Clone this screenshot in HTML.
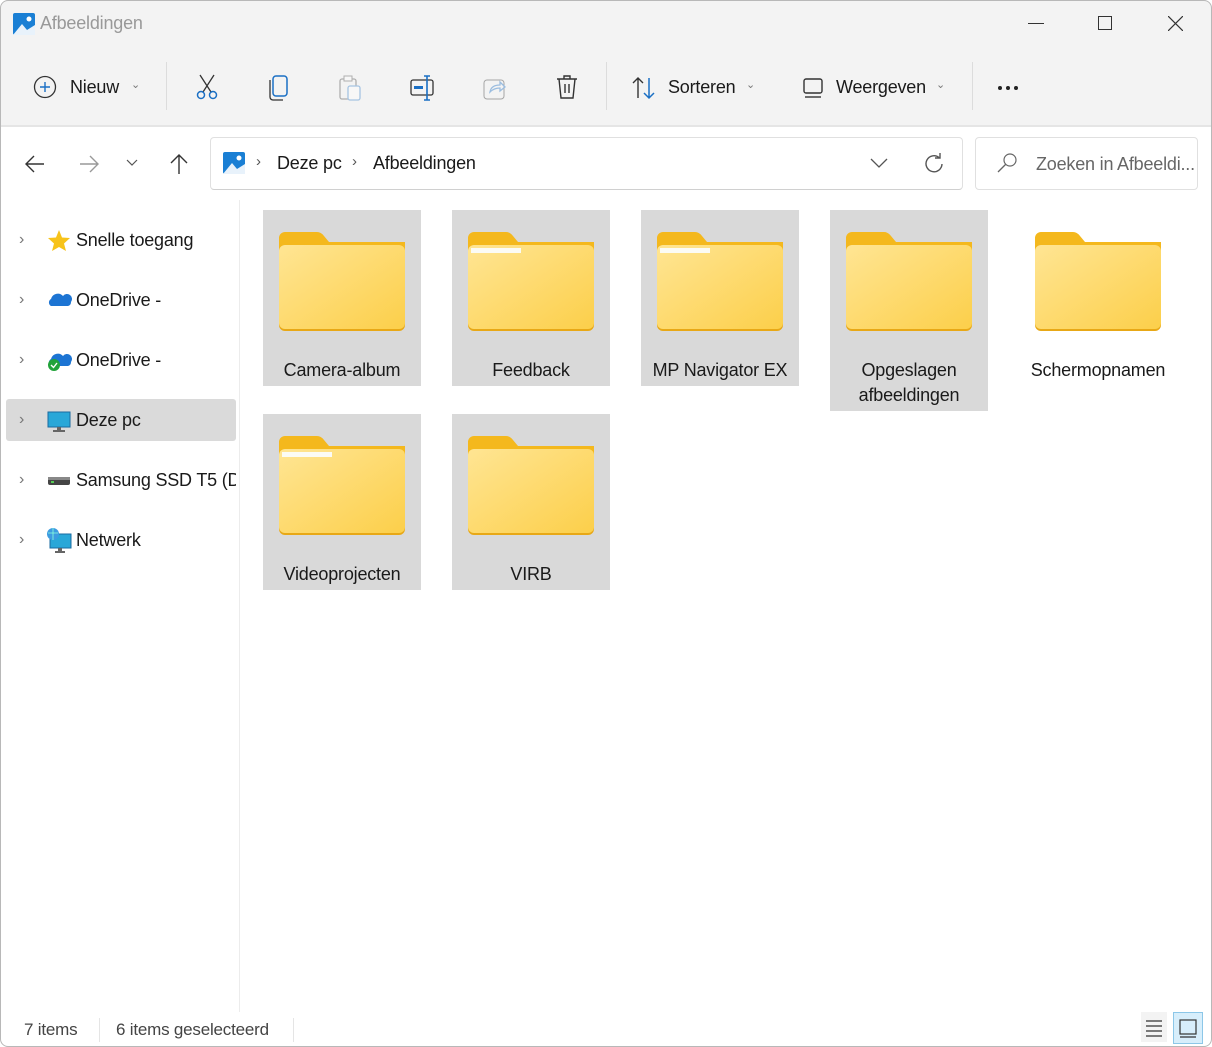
<!DOCTYPE html>
<html><head><meta charset="utf-8"><style>
*{margin:0;padding:0;box-sizing:border-box}
body{width:1212px;height:1047px;overflow:hidden;background:#fff;font-family:"Liberation Sans",sans-serif;color:#1a1a1a;position:relative}
.a{position:absolute}
.win{position:absolute;left:0;top:0;width:1212px;height:1047px;border-radius:8px;overflow:hidden;background:#fff}
.frame{position:absolute;left:0;top:0;width:1212px;height:1047px;border:1px solid #b8b8b8;border-radius:8px;pointer-events:none}
.top{position:absolute;left:0;top:0;width:1212px;height:127px;background:#f3f3f3;border-bottom:2px solid #e5e5e5}
.t{position:absolute;font-size:18px;white-space:nowrap;letter-spacing:-0.2px}
.sep{position:absolute;width:1px;background:#dcdcdc}
.tile{position:absolute;width:158px;background:#d9d9d9}
.tile.n{background:transparent}
.tile svg{position:absolute;left:16px;top:22px}
.lbl{position:absolute;left:0;width:158px;text-align:center;font-size:18px;line-height:25px;top:148px;letter-spacing:-0.2px}
.chev{position:absolute;left:19px;font-size:16px;color:#777}
</style></head><body>
<div class="win">
<div class="top"></div>
<!-- title -->
<svg class="a" style="left:13px;top:13px" width="22" height="22" viewBox="0 0 22 22"><rect width="22" height="22" rx="2" fill="#1a7fd4"/><path d="M0 22 L9 11 L14 17 L22 12 V22Z" fill="#e8f2fb"/><circle cx="16" cy="6" r="2.5" fill="#fff"/></svg>
<div class="t" style="left:40px;top:13px;color:#999">Afbeeldingen</div>
<div class="a" style="left:1028px;top:23px;width:16px;height:1px;background:#333"></div>
<div class="a" style="left:1098px;top:16px;width:14px;height:14px;border:1px solid #333"></div>
<svg class="a" style="left:1168px;top:16px" width="15" height="15"><path d="M0 0L15 15M15 0L0 15" stroke="#333" stroke-width="1.2"/></svg>
<!-- toolbar -->
<svg class="a" style="left:33px;top:75px" width="24" height="24"><circle cx="12" cy="12" r="10.5" fill="none" stroke="#333" stroke-width="1.3"/><path d="M12 7V17M7 12H17" stroke="#1a6fc4" stroke-width="1.4"/></svg>
<div class="t" style="left:70px;top:77px">Nieuw</div>
<div class="t" style="left:131px;top:78px;font-size:11px;color:#777">&#8964;</div>
<div class="sep" style="left:166px;top:62px;height:48px"></div>
<svg class="a" style="left:194px;top:74px" width="26" height="26"><path d="M6 1L17 18M20 1L9 18" stroke="#333" stroke-width="1.3"/><circle cx="7" cy="21" r="3.5" fill="none" stroke="#1a6fc4" stroke-width="1.5"/><circle cx="19" cy="21" r="3.5" fill="none" stroke="#1a6fc4" stroke-width="1.5"/></svg>
<svg class="a" style="left:268px;top:75px" width="24" height="26"><rect x="5" y="1" width="14" height="20" rx="3" fill="none" stroke="#1a6fc4" stroke-width="1.5"/><path d="M2 5V22a3 3 0 0 0 3 3h10" fill="none" stroke="#333" stroke-width="1.3"/></svg>
<svg class="a" style="left:338px;top:75px" width="26" height="26" opacity=".35"><rect x="2" y="4" width="16" height="20" rx="2" fill="none" stroke="#333" stroke-width="1.3"/><rect x="6" y="1" width="8" height="5" fill="#fff" stroke="#333"/><rect x="10" y="11" width="12" height="14" rx="2" fill="#fff" stroke="#1a6fc4" stroke-width="1.3"/></svg>
<svg class="a" style="left:410px;top:75px" width="26" height="26"><rect x="1" y="5" width="22" height="15" rx="2" fill="none" stroke="#333" stroke-width="1.3"/><rect x="4" y="11" width="9" height="3" fill="#1a6fc4"/><path d="M14 1H20M17 1V25M14 25H20" stroke="#1a6fc4" stroke-width="1.6"/></svg>
<svg class="a" style="left:483px;top:76px" width="24" height="24" opacity=".4"><rect x="1" y="4" width="20" height="19" rx="3" fill="none" stroke="#333"/><path d="M7 16C8 10 13 9 17 9V6L22 11L17 15V12C13 12 10 13 7 16Z" fill="none" stroke="#1a6fc4" stroke-width="1.3"/></svg>
<svg class="a" style="left:555px;top:74px" width="24" height="26"><path d="M2 5H22M9 5V2H15V5M4 5L6 24H18L20 5M10 10V19M14 10V19" fill="none" stroke="#333" stroke-width="1.4"/></svg>
<div class="sep" style="left:606px;top:62px;height:48px"></div>
<svg class="a" style="left:631px;top:76px" width="26" height="24"><path d="M7 22V2M2 7L7 2L12 7" fill="none" stroke="#333" stroke-width="1.4"/><path d="M18 2V22M13 17L18 22L23 17" fill="none" stroke="#1a6fc4" stroke-width="1.5"/></svg>
<div class="t" style="left:668px;top:77px">Sorteren</div>
<div class="t" style="left:746px;top:78px;font-size:11px;color:#777">&#8964;</div>
<svg class="a" style="left:802px;top:77px" width="22" height="22"><rect x="2" y="2" width="18" height="14" rx="2" fill="none" stroke="#333" stroke-width="1.4"/><path d="M3 20H19" stroke="#333" stroke-width="1.4"/></svg>
<div class="t" style="left:836px;top:77px">Weergeven</div>
<div class="t" style="left:936px;top:78px;font-size:11px;color:#777">&#8964;</div>
<div class="sep" style="left:972px;top:62px;height:48px"></div>
<div class="a" style="left:998px;top:86px;width:4px;height:4px;border-radius:2px;background:#222;box-shadow:8px 0 #222,16px 0 #222"></div>
<!-- nav row -->
<svg class="a" style="left:24px;top:153px" width="22" height="22"><path d="M20 11H3M10 3L2 11L10 19" fill="none" stroke="#333" stroke-width="1.4"/></svg>
<svg class="a" style="left:78px;top:153px" width="22" height="22"><path d="M2 11H19M12 3L20 11L12 19" fill="none" stroke="#999" stroke-width="1.4"/></svg>
<svg class="a" style="left:126px;top:159px" width="12" height="8"><path d="M1 1L6 6L11 1" fill="none" stroke="#555" stroke-width="1.2"/></svg>
<svg class="a" style="left:168px;top:153px" width="22" height="22"><path d="M11 21V3M3 10L11 2L19 10" fill="none" stroke="#333" stroke-width="1.4"/></svg>
<div class="a" style="left:210px;top:137px;width:753px;height:53px;border:1px solid #e0e0e0;border-bottom-color:#d0d0d0;border-radius:4px"></div>
<svg class="a" style="left:223px;top:152px" width="22" height="22"><rect width="22" height="22" rx="2" fill="#1a7fd4"/><path d="M0 22 L9 11 L14 17 L22 12 V22Z" fill="#e8f2fb"/><circle cx="16" cy="6" r="2.5" fill="#fff"/></svg>
<div class="t" style="left:256px;top:153px;font-size:15px;color:#555">›</div>
<div class="t" style="left:277px;top:153px">Deze pc</div>
<div class="t" style="left:352px;top:153px;font-size:15px;color:#555">›</div>
<div class="t" style="left:373px;top:153px">Afbeeldingen</div>
<svg class="a" style="left:870px;top:158px" width="18" height="10"><path d="M1 1L9 9L17 1" fill="none" stroke="#555" stroke-width="1.3"/></svg>
<svg class="a" style="left:922px;top:152px" width="24" height="24"><path d="M20 12A8 8 0 1 1 17 5.5M18 1V6H13" fill="none" stroke="#555" stroke-width="1.4"/></svg>
<div class="a" style="left:975px;top:137px;width:223px;height:53px;border:1px solid #e0e0e0;border-radius:4px"></div>
<svg class="a" style="left:996px;top:152px" width="22" height="22"><circle cx="14" cy="8" r="6" fill="none" stroke="#666" stroke-width="1.2"/><path d="M10 12L2 20" stroke="#666" stroke-width="1.3"/></svg>
<div class="t" style="left:1036px;top:154px;color:#666">Zoeken in Afbeeldi...</div>
<!-- sidebar -->
<div class="a" style="left:239px;top:200px;width:1px;height:812px;background:#ececec"></div>
<div class="a" style="left:6px;top:399px;width:230px;height:42px;background:#dadada;border-radius:3px"></div>
<div class="chev" style="top:231px">›</div><div class="chev" style="top:291px">›</div><div class="chev" style="top:351px">›</div><div class="chev" style="top:411px">›</div><div class="chev" style="top:471px">›</div><div class="chev" style="top:531px">›</div>
<svg class="a" style="left:47px;top:229px" width="24" height="23"><path d="M12 1L15 8.5L23 9L17 14.5L19 22L12 18L5 22L7 14.5L1 9L9 8.5Z" fill="#f7c31a"/></svg>
<div class="t" style="left:76px;top:230px">Snelle toegang</div>
<svg class="a" style="left:46px;top:290px" width="26" height="18"><path d="M5 16A4 4 0 0 1 5 9A7 7 0 0 1 17 6A5 5 0 0 1 25 12A4 4 0 0 1 22 16Z" fill="#1c74d3"/></svg>
<div class="t" style="left:76px;top:290px">OneDrive -</div>
<svg class="a" style="left:46px;top:350px" width="26" height="22"><path d="M5 16A4 4 0 0 1 5 9A7 7 0 0 1 17 6A5 5 0 0 1 25 12A4 4 0 0 1 22 16Z" fill="#1c74d3"/><circle cx="8" cy="15" r="6" fill="#22a33a"/><path d="M5 15L7.5 17.5L11 13" fill="none" stroke="#fff" stroke-width="1.4"/></svg>
<div class="t" style="left:76px;top:350px">OneDrive -</div>
<svg class="a" style="left:47px;top:411px" width="24" height="22"><rect x="1" y="1" width="22" height="15" fill="#29a7d8" stroke="#1a6ba0"/><rect x="10" y="16" width="4" height="3" fill="#666"/><rect x="6" y="19" width="12" height="2" fill="#666"/></svg>
<div class="t" style="left:76px;top:410px">Deze pc</div>
<svg class="a" style="left:47px;top:475px" width="24" height="12"><rect x="1" y="2" width="22" height="8" rx="2" fill="#444"/><rect x="1" y="2" width="22" height="3" fill="#888"/><rect x="4" y="6" width="3" height="2" fill="#5c5"/></svg>
<div class="t" style="left:76px;top:470px;width:160px;overflow:hidden">Samsung SSD T5 (D</div>
<svg class="a" style="left:46px;top:527px" width="26" height="26"><rect x="4" y="7" width="21" height="14" fill="#29a7d8" stroke="#1a6ba0"/><circle cx="7" cy="7" r="6" fill="#3d9be0"/><path d="M2 6H12M7 1V13" stroke="#8fd" stroke-width=".8"/><rect x="12" y="21" width="4" height="3" fill="#666"/><rect x="9" y="24" width="10" height="2" fill="#666"/></svg>
<div class="t" style="left:76px;top:530px">Netwerk</div>
<!-- folders -->
<svg width="0" height="0" style="position:absolute"><defs>
<linearGradient id="g" x1="0" y1="0" x2="1" y2="1"><stop offset="0" stop-color="#ffe593"/><stop offset="1" stop-color="#fccf4a"/></linearGradient>
<g id="f"><path d="M0 6a6 6 0 0 1 6-6H38q4 0 7 4l5 6H126V60H0Z" fill="#f4b81d"/><rect x="0" y="13" width="126" height="86" rx="6" fill="#e8a816"/><rect x="0" y="13" width="126" height="84" rx="6" fill="url(#g)"/></g>
<g id="fp"><use href="#f"/><rect x="3" y="16" width="50" height="5" fill="#fbfbf5"/></g>
</defs></svg>
<div class="tile" style="left:263px;top:210px;height:176px"><svg width="126" height="100"><use href="#f"/></svg><div class="lbl">Camera-album</div></div>
<div class="tile" style="left:452px;top:210px;height:176px"><svg width="126" height="100"><use href="#fp"/></svg><div class="lbl">Feedback</div></div>
<div class="tile" style="left:641px;top:210px;height:176px"><svg width="126" height="100"><use href="#fp"/></svg><div class="lbl">MP Navigator EX</div></div>
<div class="tile" style="left:830px;top:210px;height:201px"><svg width="126" height="100"><use href="#f"/></svg><div class="lbl">Opgeslagen<br>afbeeldingen</div></div>
<div class="tile n" style="left:1019px;top:210px;height:176px"><svg width="126" height="100"><use href="#f"/></svg><div class="lbl">Schermopnamen</div></div>
<div class="tile" style="left:263px;top:414px;height:176px"><svg width="126" height="100"><use href="#fp"/></svg><div class="lbl">Videoprojecten</div></div>
<div class="tile" style="left:452px;top:414px;height:176px"><svg width="126" height="100"><use href="#f"/></svg><div class="lbl">VIRB</div></div>
<!-- status -->
<div class="t" style="left:24px;top:1020px;font-size:17px;color:#444">7 items</div>
<div class="sep" style="left:99px;top:1018px;height:24px;background:#e5e5e5"></div>
<div class="t" style="left:116px;top:1020px;font-size:17px;color:#444">6 items geselecteerd</div>
<div class="sep" style="left:293px;top:1018px;height:24px;background:#e5e5e5"></div>
<div class="a" style="left:1141px;top:1012px;width:26px;height:30px;background:#f3f3f3"></div>
<svg class="a" style="left:1145px;top:1019px" width="18" height="18"><path d="M1 2H17M1 7H17M1 12H17M1 17H17" stroke="#333" stroke-width="1.2"/></svg>
<div class="a" style="left:1173px;top:1012px;width:30px;height:32px;background:#d7eefb;border:1px solid #8cc7e8"></div>
<svg class="a" style="left:1179px;top:1019px" width="18" height="20"><rect x="1" y="1" width="16" height="14" fill="none" stroke="#333" stroke-width="1.2"/><path d="M1 18H17" stroke="#333" stroke-width="1.2"/></svg>
</div>
<div class="frame"></div>
</body></html>
